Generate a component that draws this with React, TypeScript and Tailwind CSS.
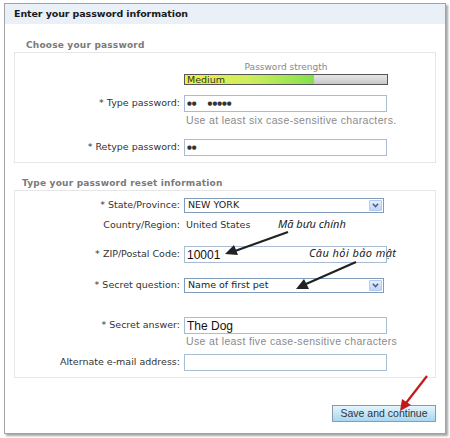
const font = "font-['DejaVu_Sans',sans-serif]";

function Label({ children }: { children: React.ReactNode }) {
  return (
    <div className="w-[169px] shrink-0 text-right pr-[4px] text-[9.5px] text-[#333]">{children}</div>
  );
}

function TextBox({ value }: { value?: string }) {
  return (
    <div className="w-[203px] h-[17px] border border-[#a8bdd3] bg-white flex items-center pl-[2px] text-[12px] text-[#111] font-['Liberation_Sans',sans-serif]">
      {value}
    </div>
  );
}

function Select({ value }: { value: string }) {
  return (
    <div className="w-[200px] h-[15px] border border-[#7f9db9] bg-white flex items-center pl-[3px] pr-[1px] text-[9.5px] text-[#222]">
      <span className="flex-1">{value}</span>
      <div className="w-[13px] h-[11px] rounded-[1px] border border-[#b5c9e8] bg-gradient-to-b from-[#e6eefc] to-[#c1d3fb] flex items-center justify-center">
        <svg width="7" height="5" viewBox="0 0 7 5">
          <path d="M0.8 0.8 L3.5 3.5 L6.2 0.8" fill="none" stroke="#4d6185" strokeWidth="1.6" />
        </svg>
      </div>
    </div>
  );
}

function Hint({ children }: { children: React.ReactNode }) {
  return (
    <div className="pl-[171px] text-[10.5px] text-[#8a8a8a] font-['Liberation_Sans',sans-serif] tracking-[0.35px]">
      {children}
    </div>
  );
}

function Mask({ groups }: { groups: string[] }) {
  return (
    <div className="-mt-[17px] pl-[172px] h-[17px] flex items-center gap-[11px] text-[5.5px] text-[#333] leading-none">
      {groups.map((g, i) => (
        <span key={i}>{g}</span>
      ))}
    </div>
  );
}

export default function App() {
  return (
    <div className={`w-[450px] h-[438px] bg-white pt-[3px] pl-[4px] ${font}`}>
      <div className="relative w-[442px] h-[431px] border border-[#a3a3a3] shadow-[2px_2px_2px_rgba(0,0,0,0.35)]">
        <div className="h-[20px] bg-[#e9f0f7] pl-[9px] flex items-center text-[9.5px] font-bold text-[#1a1a1a] tracking-[-0.1px]">
          Enter your password information
        </div>

        <div className="px-[9px]">
          <div className="mt-[15px] pl-[12px] text-[9px] font-bold text-[#7a7a7a] tracking-[0.2px] leading-[13px]">
            Choose your password
          </div>
          <div className="h-[111px] border border-[#e6e6e6] pt-[8px]">
            <div className="flex">
              <div className="w-[169px] shrink-0" />
              <div className="w-[204px]">
                <div className="text-center text-[9px] text-[#888] leading-[12px]">Password strength</div>
                <div className="mt-[1px] h-[11px] border border-[#555] bg-gradient-to-b from-[#e6e6e6] to-[#c8c8c8] flex">
                  <div className="w-[64%] bg-gradient-to-r from-[#f4f03c] via-[#cdec5e] to-[#82e04e] pl-[2px] text-[9.5px] leading-[9px] text-[#333]">
                    Medium
                  </div>
                </div>
              </div>
            </div>

            <div className="mt-[10px] flex items-center">
              <Label>* Type password:</Label>
              <TextBox />
            </div>
            <Mask groups={["●●", "●●●●●"]} />
            <div className="mt-[1px]">
              <Hint>Use at least six case-sensitive characters.</Hint>
            </div>

            <div className="mt-[10px] flex items-center">
              <Label>* Retype password:</Label>
              <TextBox />
            </div>
            <Mask groups={["●●"]} />
          </div>

          <div className="mt-[14px] pl-[8px] text-[9px] font-bold text-[#7a7a7a] tracking-[0.2px] leading-[13px]">
            Type your password reset information
          </div>
          <div className="h-[188px] border border-[#e6e6e6] pt-[7px]">
            <div className="flex items-center">
              <Label>* State/Province:</Label>
              <Select value="NEW YORK" />
            </div>
            <div className="mt-[6px] flex items-center h-[12px]">
              <Label>Country/Region:</Label>
              <span className="pl-[2px] text-[9.5px] text-[#333]">United States</span>
            </div>
            <div className="mt-[15px] flex items-center">
              <Label>* ZIP/Postal Code:</Label>
              <TextBox value="10001" />
            </div>
            <div className="mt-[15px] flex items-center">
              <Label>* Secret question:</Label>
              <Select value="Name of first pet" />
            </div>
            <div className="mt-[24px] flex items-center">
              <Label>* Secret answer:</Label>
              <TextBox value="The Dog" />
            </div>
            <Hint>Use at least five case-sensitive characters</Hint>
            <div className="mt-[4px] flex items-center">
              <Label>Alternate e-mail address:</Label>
              <TextBox />
            </div>
          </div>

          <div className="mt-[27px] flex justify-end">
            <button className="w-[104px] h-[17px] border border-[#8d9aaa] bg-gradient-to-b from-[#e6f4fc] via-[#c4e6f8] to-[#a6d7f2] text-[10.5px] leading-none text-[#333] font-['Liberation_Sans',sans-serif]">
              Save and continue
            </button>
          </div>
        </div>

        <div className="absolute left-[273px] top-[212px] text-[11px] text-[#222] font-['Noto_Sans',sans-serif] italic">
          Mã bưu chính
        </div>
        <div className="absolute left-[304px] top-[241px] text-[11px] text-[#222] font-['Noto_Sans',sans-serif] italic tracking-[0.4px]">
          Câu hỏi bảo mật
        </div>
        <svg className="absolute left-0 top-0 pointer-events-none" width="442" height="431" viewBox="4 3 442 431">
          <line x1="287" y1="231" x2="234" y2="250" stroke="#222" strokeWidth="2.2" />
          <polygon points="224,253 233,244 237,254" fill="#222" />
          <line x1="355" y1="261" x2="305" y2="283" stroke="#222" strokeWidth="2.2" />
          <polygon points="295,288 303,278 308,288" fill="#222" />
          <line x1="426" y1="375" x2="405" y2="402" stroke="#c21a1a" strokeWidth="2.2" />
          <polygon points="399,410 401,398 410,404" fill="#c21a1a" />
        </svg>
      </div>
    </div>
  );
}
